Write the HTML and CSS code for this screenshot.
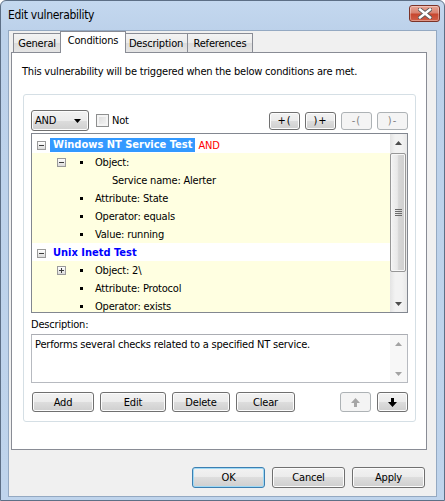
FILE: index.html
```html
<!DOCTYPE html>
<html>
<head>
<meta charset="utf-8">
<link rel="stylesheet" href="styles.css">
</head>
<body>
<div class="window">
  <div class="titlebar">
    <span class="title">Edit vulnerability</span>
    <div class="close">
      <svg width="14" height="11" viewBox="0 0 14 11">
        <path d="M2 1.5 L12 9.5 M12 1.5 L2 9.5" stroke="#5a5a5a" stroke-width="4.2" stroke-linecap="square"/>
        <path d="M2 1.5 L12 9.5 M12 1.5 L2 9.5" stroke="#ffffff" stroke-width="2.4" stroke-linecap="square"/>
      </svg>
    </div>
  </div>
  <div class="client">
    <div class="tabs">
      <div class="tab first">General</div>
      <div class="tab active">Conditions</div>
      <div class="tab">Description</div>
      <div class="tab">References</div>
    </div>
    <div class="page">
      <p class="intro">This vulnerability will be triggered when the below conditions are met.</p>
      <div class="group">
        <div class="toolbar">
          <div class="combo">
            <span>AND</span>
            <svg width="7" height="4" viewBox="0 0 7 4"><path d="M0 0 H7 L3.5 4 Z" fill="#000"/></svg>
          </div>
          <div class="check"><span class="box"></span><span>Not</span></div>
          <div class="parens">
            <button class="btn paren">+(</button>
            <button class="btn paren">)+</button>
            <button class="btn paren disabled">-(</button>
            <button class="btn paren disabled">)-</button>
          </div>
        </div>
        <div class="tree">
          <div class="tree-body">
            <div class="row top">
              <span class="exp minus"></span>
              <span class="node sel">Windows NT Service Test</span>
              <span class="op">AND</span>
            </div>
            <div class="row child"><span class="exp minus"></span><span class="bullet"></span><span class="txt">Object:</span></div>
            <div class="row child sub"><span class="txt">Service name: Alerter</span></div>
            <div class="row child"><span class="exp-space"></span><span class="bullet"></span><span class="txt">Attribute: State</span></div>
            <div class="row child"><span class="exp-space"></span><span class="bullet"></span><span class="txt">Operator: equals</span></div>
            <div class="row child"><span class="exp-space"></span><span class="bullet"></span><span class="txt">Value: running</span></div>
            <div class="row top">
              <span class="exp minus"></span>
              <span class="node blue">Unix Inetd Test</span>
            </div>
            <div class="row child"><span class="exp plus"></span><span class="bullet"></span><span class="txt">Object: 2\</span></div>
            <div class="row child"><span class="exp-space"></span><span class="bullet"></span><span class="txt">Attribute: Protocol</span></div>
            <div class="row child"><span class="exp-space"></span><span class="bullet"></span><span class="txt">Operator: exists</span></div>
          </div>
          <div class="vscroll">
            <div class="sb-btn"><svg width="7" height="4" viewBox="0 0 7 4"><path d="M3.5 0 L7 4 H0 Z" fill="#4d4d4d"/></svg></div>
            <div class="sb-track">
              <div class="thumb"><span class="grip"></span></div>
            </div>
            <div class="sb-btn"><svg width="7" height="4" viewBox="0 0 7 4"><path d="M0 0 H7 L3.5 4 Z" fill="#4d4d4d"/></svg></div>
          </div>
        </div>
        <div class="desc-label">Description:</div>
        <div class="desc">
          <div class="desc-text">Performs several checks related to a specified NT service.</div>
          <div class="vscroll plain">
            <div class="sb-btn"><svg width="7" height="4" viewBox="0 0 7 4"><path d="M3.5 0 L7 4 H0 Z" fill="#a3a3a3"/></svg></div>
            <div class="sb-btn"><svg width="7" height="4" viewBox="0 0 7 4"><path d="M0 0 H7 L3.5 4 Z" fill="#a3a3a3"/></svg></div>
          </div>
        </div>
        <div class="actions">
          <button class="btn w-add">Add</button>
          <button class="btn w-edit">Edit</button>
          <button class="btn w-del">Delete</button>
          <button class="btn w-clear">Clear</button>
          <div class="moves">
            <button class="btn arrow disabled"><svg width="9" height="9" viewBox="0 0 9 9"><path d="M3 9 H6 V5 H9 L4.5 0 L0 5 H3 Z" fill="#a6a6a6"/></svg></button>
            <button class="btn arrow"><svg width="9" height="9" viewBox="0 0 9 9"><path d="M3 0 H6 V4 H9 L4.5 9 L0 4 H3 Z" fill="#000"/></svg></button>
          </div>
        </div>
      </div>
    </div>
    <div class="footer">
      <button class="btn big default">OK</button>
      <button class="btn big">Cancel</button>
      <button class="btn big">Apply</button>
    </div>
  </div>
</div>
</body>
</html>
```

FILE: styles.css
```css
* { box-sizing: border-box; }
html, body { margin: 0; padding: 0; background: #fff; }
body {
  font-family: "DejaVu Sans Condensed", "DejaVu Sans", sans-serif;
  font-stretch: condensed;
  font-size: 11px;
  line-height: 13px;
  letter-spacing: -0.2px;
  color: #000;
}
.window {
  width: 445px;
  height: 501px;
  border: 1px solid #5d6f86;
  border-radius: 6px 6px 0 0;
  background: linear-gradient(#c4d8ef, #bcd1ea 30px, #bfd4ec);
  display: flex;
  flex-direction: column;
  padding-bottom: 3px;
}
.titlebar {
  height: 29px;
  display: flex;
  align-items: flex-start;
  padding: 0 4px 0 7px;
  flex: none;
}
.title {
  margin-top: 7px;
  font-family: "DejaVu Sans", sans-serif;
  font-stretch: condensed;
  font-size: 12px;
  letter-spacing: -0.3px;
  line-height: 15px;
}
.close {
  margin-left: auto;
  margin-top: 4px;
  width: 31px;
  height: 17px;
  border: 1px solid #7b3328;
  border-radius: 3px;
  background: linear-gradient(#e8a494, #d88371 45%, #c7472f 55%, #d0604a);
  box-shadow: inset 0 0 0 1px rgba(255,255,255,0.35);
  display: flex;
  align-items: center;
  justify-content: center;
}
.client {
  flex: 1;
  margin: 0 7px;
  background: #f0f0f0;
  border: 1px solid #94a9c2;
  display: flex;
  flex-direction: column;
}
.tabs {
  display: flex;
  align-items: flex-end;
  height: 22px;
  padding-left: 4px;
  position: relative;
  z-index: 2;
}
.tab {
  height: 19px;
  margin-bottom: 1px;
  border: 1px solid #898c95;
  border-bottom: none;
  background: linear-gradient(#f3f3f3, #ebebeb 50%, #dcdcdc 50%, #e5e5e5);
  padding: 3px 0 0 0;
  text-align: center;
  margin-left: -1px;
  white-space: nowrap;
}
.tab.first { margin-left: 0; width: 48px; }
.tab.active {
  height: 22px;
  margin-bottom: 0;
  background: #fff;
  padding-top: 2px;
  width: 66px;
  margin-right: -1px;
  position: relative;
  z-index: 3;
}
.tab:nth-child(3) { width: 64px; }
.tab:nth-child(4) { width: 66px; }
.page {
  margin: -1px 0 0 2px;
  width: 416px;
  height: 398px;
  background: #fff;
  border: 1px solid #898c95;
  position: relative;
  z-index: 1;
  flex: none;
}
.intro {
  margin: 0;
  padding: 12px 0 0 10px;
  height: 41px;
}
.group {
  margin-left: 11px;
  width: 393px;
  border: 1px solid #d5dfe5;
  border-radius: 3px;
  padding: 15px 7px 9px 7px;
}
.toolbar {
  display: flex;
  align-items: center;
  height: 21px;
}
.combo {
  width: 58px;
  height: 21px;
  border: 1px solid #707070;
  border-radius: 3px;
  background: linear-gradient(#f2f2f2, #ebebeb 50%, #dddddd 50%, #cfcfcf);
  box-shadow: inset 0 0 0 1px #fcfcfc;
  display: flex;
  align-items: center;
  justify-content: space-between;
  padding: 0 7px 0 3px;
}
.check {
  display: flex;
  align-items: center;
  margin-left: 7px;
}
.check .box {
  width: 13px;
  height: 13px;
  border: 1px solid #8e8f8f;
  background: linear-gradient(135deg, #d9d9d9, #f7f7f7);
  box-shadow: inset 0 0 0 2px #f4f4f4;
  margin-right: 3px;
}
.parens {
  margin-left: auto;
  display: flex;
  gap: 5px;
}
.btn {
  font: inherit;
  letter-spacing: inherit;
  color: #000;
  border: 1px solid #707070;
  border-radius: 3px;
  background: linear-gradient(#f2f2f2, #ebebeb 50%, #dddddd 50%, #cfcfcf);
  box-shadow: inset 0 0 0 1px #fcfcfc;
  padding: 0;
  display: flex;
  align-items: center;
  justify-content: center;
}
.btn.disabled {
  border-color: #adb2b5;
  background: #f4f4f4;
  color: #838383;
  box-shadow: none;
}
.paren { width: 31px; height: 18px; letter-spacing: 1px; }
.tree {
  margin-top: 2px;
  height: 180px;
  border: 1px solid #828790;
  display: flex;
}
.tree-body {
  flex: 1;
  overflow: hidden;
  padding-top: 1px;
}
.row {
  height: 18px;
  display: flex;
  align-items: center;
  white-space: nowrap;
}
.row.top { padding-left: 5px; padding-top: 2px; }
.row.child { background: #ffffe1; padding-left: 25px; }
.row.child.sub { padding-left: 80px; }
.exp {
  width: 9px;
  height: 9px;
  border: 1px solid #9a9a9a;
  background: linear-gradient(#ffffff, #dadada);
  position: relative;
  flex: none;
}
.exp::before {
  content: "";
  position: absolute;
  left: 1px;
  top: 3px;
  width: 5px;
  height: 1px;
  background: #3c3c3c;
}
.exp.plus::after {
  content: "";
  position: absolute;
  left: 3px;
  top: 1px;
  width: 1px;
  height: 5px;
  background: #3c3c3c;
}
.exp-space { width: 9px; flex: none; }
.bullet {
  width: 3px;
  height: 3px;
  background: #000;
  margin-left: 14px;
  flex: none;
}
.row.child .txt { margin-left: 12px; }
.row.child.sub .txt { margin-left: 0; }
.node {
  margin-left: 4px;
  padding: 0 3px;
  font-weight: bold;
  letter-spacing: 0;
  line-height: 14px;
  height: 14px;
}
.node.sel { background: #3399ff; color: #fff; }
.node.blue { color: #0000ff; }
.op { color: #ff0000; margin-left: 3px; }
.vscroll {
  width: 17px;
  display: flex;
  flex-direction: column;
  background: linear-gradient(90deg, #e3e3e3, #f2f2f2 30%, #f2f2f2 70%, #e8e8e8);
  flex: none;
}
.sb-btn {
  height: 17px;
  display: flex;
  align-items: center;
  justify-content: center;
  flex: none;
}
.sb-track {
  flex: 1;
  padding: 2px 1px 0 0;
}
.thumb {
  height: 119px;
  border: 1px solid #979797;
  border-radius: 2px;
  background: linear-gradient(90deg, #f3f3f3, #e8e8e8 45%, #d6d6d6 55%, #cfcfcf);
  box-shadow: inset 0 0 0 1px #f7f7f7;
  display: flex;
  align-items: center;
  justify-content: center;
}
.grip {
  width: 7px;
  height: 7px;
  background: repeating-linear-gradient(#6b6b6b 0 1px, transparent 1px 2px);
}
.desc-label {
  margin-top: 5px;
  height: 13px;
}
.desc {
  margin-top: 3px;
  height: 49px;
  border: 1px solid #b7bac0;
  border-top-color: #abadb3;
  display: flex;
}
.desc-text {
  flex: 1;
  padding: 3px 0 0 3px;
}
.vscroll.plain {
  justify-content: space-between;
  background: #f7f7f7;
}
.actions {
  margin-top: 9px;
  display: flex;
  height: 20px;
  padding-left: 1px;
}
.actions .btn { height: 20px; margin-right: 6px; }
.w-add { width: 62px; }
.w-edit { width: 66px; }
.w-del { width: 58px; }
.w-clear { width: 59px; }
.moves {
  margin-left: auto;
  display: flex;
}
.actions .moves .btn { width: 31px; margin-right: 0; margin-left: 6px; }
.footer {
  display: flex;
  justify-content: flex-end;
  gap: 7px;
  padding: 17px 11px 0 0;
}
.btn.big { width: 73px; height: 21px; }
.btn.default {
  border-color: #3c7fb1;
  box-shadow: inset 0 0 0 1px #9fd9f5;
}
```
